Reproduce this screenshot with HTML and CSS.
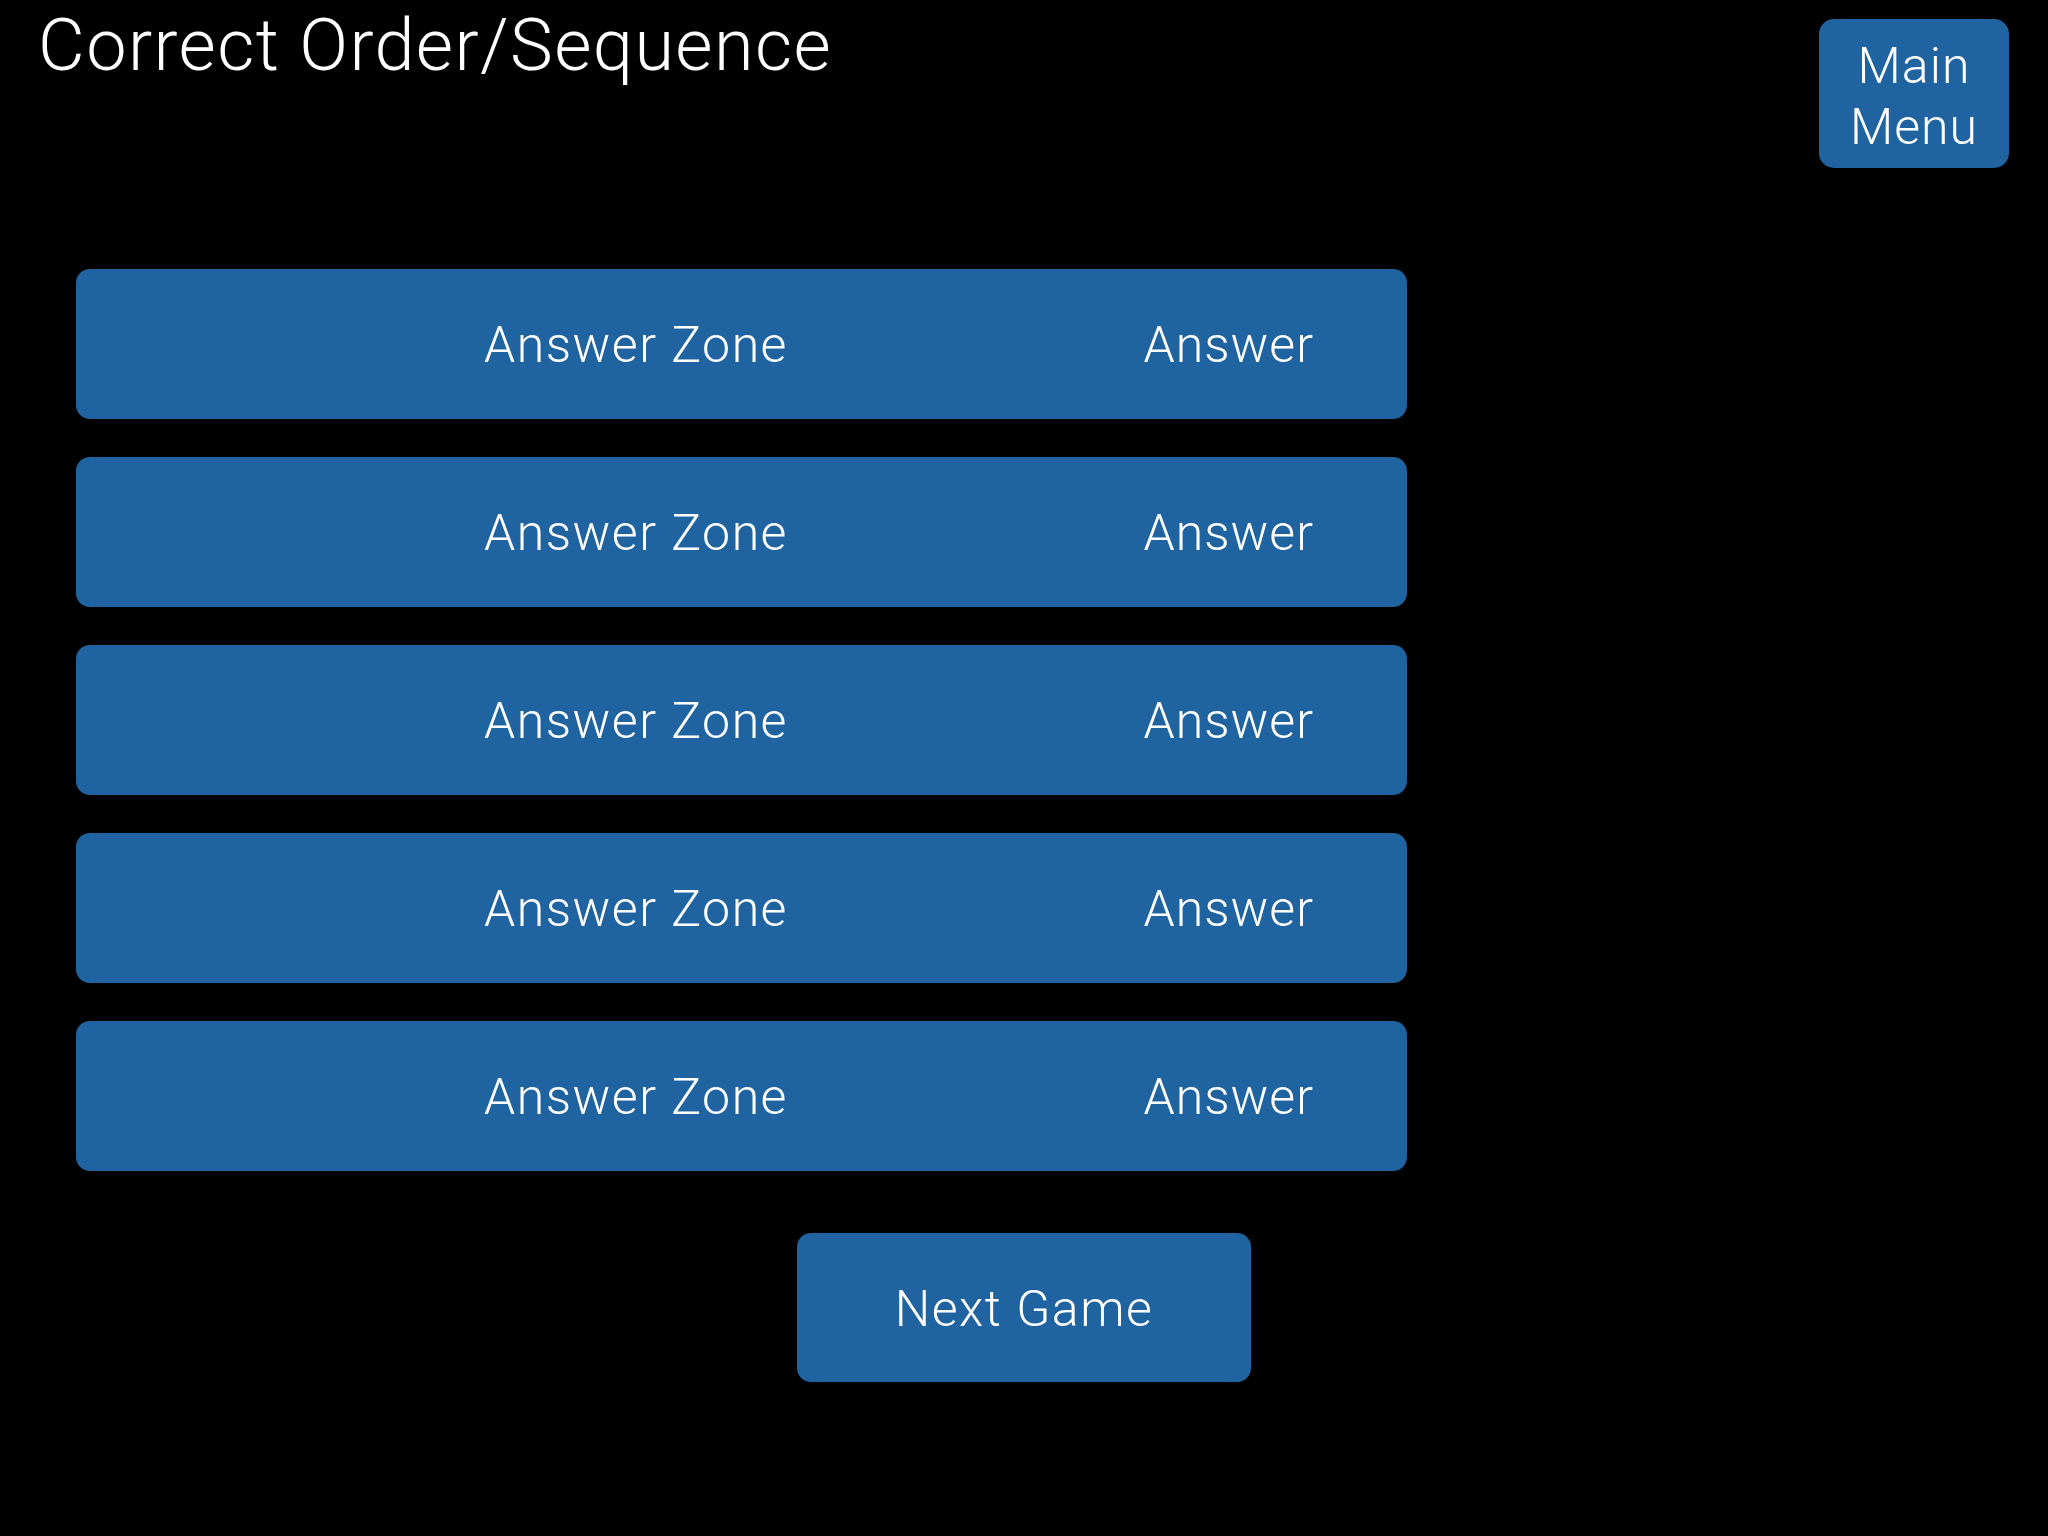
FILE: index.html
```html
<!DOCTYPE html>
<html lang="en">
<head>
<meta charset="utf-8">
<title>Correct Order/Sequence</title>
<link rel="stylesheet" href="styles.css">
</head>
<body>
<header class="top">
  <h1 class="title">Correct Order/Sequence</h1>
  <button class="menu">Main<br>Menu</button>
</header>
<main class="zones">
  <div class="zone"><span class="zone-label">Answer Zone</span><span class="answer">Answer</span></div>
  <div class="zone"><span class="zone-label">Answer Zone</span><span class="answer">Answer</span></div>
  <div class="zone"><span class="zone-label">Answer Zone</span><span class="answer">Answer</span></div>
  <div class="zone"><span class="zone-label">Answer Zone</span><span class="answer">Answer</span></div>
  <div class="zone"><span class="zone-label">Answer Zone</span><span class="answer">Answer</span></div>
</main>
<div class="actions">
  <button class="next">Next Game</button>
</div>
</body>
</html>
```

FILE: styles.css
```css
html, body {
  margin: 0;
  padding: 0;
  background: #000;
  width: 2048px;
  height: 1536px;
  overflow: hidden;
  font-family: Roboto, "Helvetica Neue", "Liberation Sans", sans-serif;
  font-weight: 300;
  color: #fff;
}

.top {
  display: flex;
  justify-content: space-between;
  align-items: flex-start;
  padding: 0 39px 0 38px;
  height: 269px;
  box-sizing: border-box;
}

.title {
  margin: 10px 0 0 0;
  font-size: 72px;
  line-height: 72px;
  font-weight: 300;
  letter-spacing: 1.4px;
}

.menu {
  margin-top: 19px;
  width: 190px;
  height: 149px;
  padding: 17px 0 10px;
  box-sizing: border-box;
  border: none;
  border-radius: 15px;
  background: #1f63a0;
  color: #fff;
  font-family: inherit;
  font-weight: 300;
  font-size: 50px;
  line-height: 61px;
  letter-spacing: 1px;
  text-align: center;
}

.zones {
  display: flex;
  flex-direction: column;
  gap: 38px;
  margin-left: 76px;
  width: 1331px;
}

.zone {
  height: 150px;
  border-radius: 14px;
  background: #1f63a0;
  display: flex;
  align-items: center;
  padding: 2px 93px 0 408px;
  box-sizing: border-box;
  font-size: 50px;
  line-height: 148px;
  letter-spacing: 1.5px;
}

.zone-label {
  flex: 1;
}

.answer {
  text-align: right;
  letter-spacing: 1px;
}

.actions {
  display: flex;
  justify-content: center;
  margin-top: 62px;
}

.next {
  width: 454px;
  height: 149px;
  border: none;
  border-radius: 14px;
  background: #1f63a0;
  color: #fff;
  font-family: inherit;
  font-weight: 300;
  font-size: 50px;
  line-height: 146px;
  letter-spacing: 1.5px;
  padding: 3px 0 0;
}
```
